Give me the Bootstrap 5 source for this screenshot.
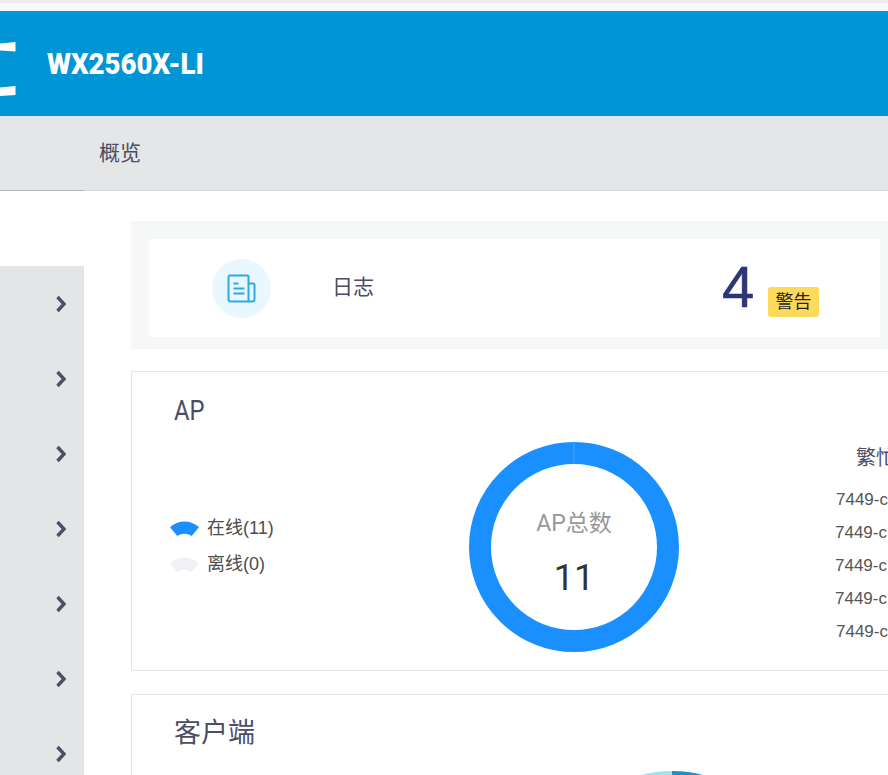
<!DOCTYPE html>
<html lang="zh">
<head>
<meta charset="utf-8">
<link rel="stylesheet" href="https://cdn.jsdelivr.net/npm/bootstrap@5.3.0/dist/css/bootstrap.min.css">
<style>
html,body{height:775px;overflow:hidden}
body{background:#fff;font-family:"Liberation Sans","Noto Sans CJK SC",sans-serif;color:#4a4d63;width:888px}
.strip-a{height:3px;background:#ececee}
.strip-b{height:8px;background:#f8f8fa}
.hp-head{height:105px;background:#0096d6;color:#fff}
.hp-logo{width:47px;height:105px;flex:none}
.hp-title{font-family:"Roboto",sans-serif;font-weight:900;font-size:30px;line-height:1;transform:scaleX(.92);transform-origin:left center}
.hp-nav{height:75px;background:#e5e6e8;border-bottom:1px solid #d6d6d8;padding-left:99px;font-size:21px;color:#4a4d63}
.hp-nav-edge{height:1px;width:84px;background:#b4b4b6;margin-top:-1px;position:relative}
.hp-body{height:584px}
.hp-side{width:84px;flex:none;margin-top:75px;background:#e2e6e7}
.hp-side-row{height:75px;display:flex;align-items:center;justify-content:flex-end;padding-right:17px;padding-top:1px}
.hp-main{width:767px;flex:none;margin-left:47px;padding-top:30px}
.log-panel{height:128px;background:#f6f8f8;padding:18px}
.log-inner{height:98px;width:731px;background:#fff}
.log-icon{width:59px;height:59px;border-radius:50%;background:#e9f7fe;margin-left:63px;flex:none}
.log-label{margin-left:61px;font-size:21px;width:390px;padding-bottom:2px}
.log-num{font-size:58px;color:#2d3575;line-height:1;width:46px;padding-bottom:2px;-webkit-text-stroke:.6px #2d3575}
.log-tag{background:#ffd95a;color:#222;font-size:18px;border-radius:3px;width:51px;height:30px;line-height:30px;text-align:center;margin-top:28px}
.box-ap{height:300px;border:1px solid #e6e6e6;margin-top:22px;position:relative}
.box-client{height:120px;border:1px solid #e6e6e6;margin-top:23px;position:relative}
.box-title{font-family:"Roboto","Noto Sans CJK SC",sans-serif;font-size:27px;line-height:1;padding:25px 0 0 42px;color:#4a4d63}
.box-ap .box-title{padding-top:26px}
.narrow-latin{display:inline-block;transform:scaleX(.88);transform-origin:left center}
.legend-list{position:absolute;left:38px;top:138px;font-size:18px;color:#4d4d4d}
.legend-row{height:36px;display:flex;align-items:center;gap:8px}
.donut{position:absolute;left:337px;top:70px;width:210px;height:210px}
.donut-label{position:absolute;left:0;right:0;top:70px;text-align:center;font-family:"Roboto","Noto Sans CJK SC",sans-serif;font-size:23px;color:#979797;line-height:1}
.donut-val{position:absolute;left:0;right:0;top:118px;text-align:center;font-family:"Roboto",sans-serif;font-size:36px;color:#333;line-height:1}
.busy-title{position:absolute;left:724px;top:71px;font-size:20px;white-space:nowrap}
.busy-list{position:absolute;left:704px;top:111px;font-size:17px;color:#555;white-space:nowrap}
.busy-list>div{height:33px;line-height:33px}
.busy-list>.nudge-left{margin-left:-1px}
.mini-pie{position:absolute;left:506px;top:76px}
</style>
</head>
<body>
<div class="strip-a"></div>
<div class="strip-b"></div>
<header class="hp-head d-flex align-items-center">
  <svg class="hp-logo" viewBox="0 0 47 105" aria-hidden="true"><path fill="#fff" d="M0 32.500 15.500 31 15.500 40.500 0 39.500ZM0 76.500 15.500 75 15.500 84 0 85Z"/></svg>
  <div class="hp-title">WX2560X-LI</div>
</header>
<nav class="hp-nav d-flex align-items-center">概览</nav>
<div class="hp-nav-edge"></div>
<div class="hp-body d-flex">
  <aside class="hp-side">
    <div class="hp-side-row"><svg width="12" height="18" viewBox="0 0 12 18"><path d="M2.500 2 9 9 2.500 16" fill="none" stroke="#4d5065" stroke-width="3.400"/></svg></div>
    <div class="hp-side-row"><svg width="12" height="18" viewBox="0 0 12 18"><path d="M2.500 2 9 9 2.500 16" fill="none" stroke="#4d5065" stroke-width="3.400"/></svg></div>
    <div class="hp-side-row"><svg width="12" height="18" viewBox="0 0 12 18"><path d="M2.500 2 9 9 2.500 16" fill="none" stroke="#4d5065" stroke-width="3.400"/></svg></div>
    <div class="hp-side-row"><svg width="12" height="18" viewBox="0 0 12 18"><path d="M2.500 2 9 9 2.500 16" fill="none" stroke="#4d5065" stroke-width="3.400"/></svg></div>
    <div class="hp-side-row"><svg width="12" height="18" viewBox="0 0 12 18"><path d="M2.500 2 9 9 2.500 16" fill="none" stroke="#4d5065" stroke-width="3.400"/></svg></div>
    <div class="hp-side-row"><svg width="12" height="18" viewBox="0 0 12 18"><path d="M2.500 2 9 9 2.500 16" fill="none" stroke="#4d5065" stroke-width="3.400"/></svg></div>
    <div class="hp-side-row"><svg width="12" height="18" viewBox="0 0 12 18"><path d="M2.500 2 9 9 2.500 16" fill="none" stroke="#4d5065" stroke-width="3.400"/></svg></div>
  </aside>
  <main class="hp-main">
    <section class="log-panel">
      <div class="log-inner d-flex align-items-center">
        <div class="log-icon d-flex align-items-center justify-content-center">
          <svg width="29" height="29" viewBox="0 0 29 29" fill="none" stroke="#2eaae6" stroke-width="2"><path d="M1.500 3a1.500 1.500 0 0 1 1.500-1.500H20.500a1 1 0 0 1 1 1V27.500H4a2.500 2.500 0 0 1-2.500-2.500Z"/><path d="M21.500 9.500H26a1.500 1.500 0 0 1 1.500 1.500V25a2.500 2.500 0 0 1-2.500 2.500H21.500"/><path d="M6.500 9.500h5M6.500 14.500h11M6.500 19.500h11" stroke-width="2.200"/></svg>
        </div>
        <div class="log-label">日志</div>
        <div class="log-num">4</div>
        <div class="log-tag">警告</div>
      </div>
    </section>
    <section class="box-ap">
      <div class="box-title"><span class="narrow-latin">AP</span></div>
      <div class="legend-list">
        <div class="legend-row"><svg width="29" height="15" viewBox="0 0 29 15"><path d="M0 6.300C8 -1.500 21 -1.500 29 6.300L21.700 15C17 12 12 12 7.300 15Z" fill="#1a90ff"/></svg>在线(11)</div>
        <div class="legend-row"><svg width="29" height="15" viewBox="0 0 29 15"><path d="M0 6.300C8 -1.500 21 -1.500 29 6.300L21.700 15C17 12 12 12 7.300 15Z" fill="#eff1f5"/></svg>离线(0)</div>
      </div>
      <div class="donut">
        <svg width="210" height="210" viewBox="0 0 210 210"><circle cx="105" cy="105" r="94" fill="none" stroke="#1a90ff" stroke-width="22"/><path d="M105 0V22" stroke="#6db7ff" stroke-width=".6"/></svg>
        <div class="donut-label">AP总数</div>
        <div class="donut-val">11</div>
      </div>
      <div class="busy-title">繁忙AP</div>
      <div class="busy-list">
        <div>7449-c</div>
        <div class="nudge-left">7449-c</div>
        <div class="nudge-left">7449-c</div>
        <div class="nudge-left">7449-c</div>
        <div>7449-c</div>
      </div>
    </section>
    <section class="box-client">
      <div class="box-title">客户端</div>
      <svg class="mini-pie" width="68" height="5" viewBox="0 0 68 5"><path d="M0 5C10 1.500 22 0 34 0V5Z" fill="#9fe3f2"/><path d="M34 0C46 0 58 1.500 68 5H34Z" fill="#1f8fc9"/></svg>
    </section>
  </main>
</div>
<script src="https://cdn.jsdelivr.net/npm/bootstrap@5.3.0/dist/js/bootstrap.bundle.min.js"></script>
</body>
</html>
